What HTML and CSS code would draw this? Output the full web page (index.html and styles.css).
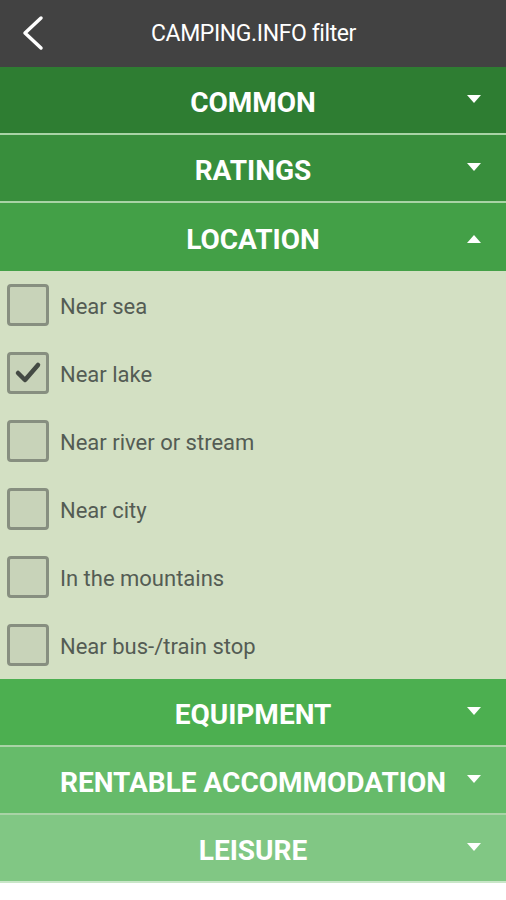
FILE: index.html
```html
<!DOCTYPE html>
<html>
<head>
<meta charset="utf-8">
<link rel="stylesheet" href="styles.css">
</head>
<body>
<div class="app">
  <header class="topbar">
    <svg class="back" width="30" height="40" viewBox="0 0 30 40"><polyline points="22,4 6,19 22,34" fill="none" stroke="#fff" stroke-width="3.5" stroke-linecap="round" stroke-linejoin="round"/></svg>
    <div class="title">CAMPING.INFO filter</div>
  </header>

  <div class="section s1"><span class="label">COMMON</span><span class="arrow down"></span></div>
  <div class="section s2"><span class="label">RATINGS</span><span class="arrow down"></span></div>
  <div class="section s3 open"><span class="label">LOCATION</span><span class="arrow up"></span></div>

  <div class="content">
    <div class="row"><span class="box"></span><span class="text">Near sea</span></div>
    <div class="row"><span class="box"><svg width="36" height="36" viewBox="0 0 36 36"><polyline points="8,18 15,25 28,10" fill="none" stroke="#444a44" stroke-width="4.5" stroke-linecap="round" stroke-linejoin="round"/></svg></span><span class="text">Near lake</span></div>
    <div class="row"><span class="box"></span><span class="text">Near river or stream</span></div>
    <div class="row"><span class="box"></span><span class="text">Near city</span></div>
    <div class="row"><span class="box"></span><span class="text">In the mountains</span></div>
    <div class="row"><span class="box"></span><span class="text">Near bus-/train stop</span></div>
  </div>

  <div class="section s4"><span class="label">EQUIPMENT</span><span class="arrow down"></span></div>
  <div class="section s5"><span class="label">RENTABLE ACCOMMODATION</span><span class="arrow down"></span></div>
  <div class="section s6"><span class="label">LEISURE</span><span class="arrow down"></span></div>
</div>
</body>
</html>
```
FILE: styles.css
```css
html, body {
  margin: 0;
  padding: 0;
  background: #ffffff;
}
body {
  font-family: Roboto, "Liberation Sans", sans-serif;
}
.app {
  width: 506px;
}
.topbar {
  height: 67px;
  background: #424242;
  display: flex;
  align-items: center;
  justify-content: center;
  position: relative;
}
.back {
  position: absolute;
  left: 19px;
  top: 14px;
}
.title {
  color: #ffffff;
  font-size: 23px;
  letter-spacing: -0.4px;
  padding-left: 1px;
}
.section {
  height: 66px;
  border-bottom: 2px solid #a9d3a6;
  display: flex;
  align-items: center;
  justify-content: center;
  position: relative;
  color: #ffffff;
}
.section.open {
  border-bottom: none;
  height: 68px;
}
.label {
  font-size: 28px;
  font-weight: 700;
  padding-top: 4px;
}
.s1 { background: #2e7d32; }
.s2 { background: #388e3c; }
.s3 { background: #43a047; }
.s4 { background: #4caf50; }
.s5 { background: #66bb6a; }
.s6 { background: #81c784; border-bottom-color: #c9e6c8; }
.arrow {
  position: absolute;
  right: 25px;
  width: 0;
  height: 0;
  border-left: 7.5px solid transparent;
  border-right: 7.5px solid transparent;
}
.arrow.down {
  top: 28px;
  border-top: 8px solid #ffffff;
}
.arrow.up {
  top: 32px;
  border-bottom: 8px solid #ffffff;
}
.content {
  background: #d3e0c3;
}
.row {
  height: 68px;
  display: flex;
  align-items: center;
  padding-left: 7px;
}
.box {
  width: 36px;
  height: 36px;
  border: 3px solid #878f80;
  border-radius: 4px;
  background: #c8d3b9;
  display: flex;
  align-items: center;
  justify-content: center;
  flex: none;
}
.text {
  margin-left: 11px;
  font-size: 22px;
  color: #545c54;
  padding-top: 2px;
}
```
